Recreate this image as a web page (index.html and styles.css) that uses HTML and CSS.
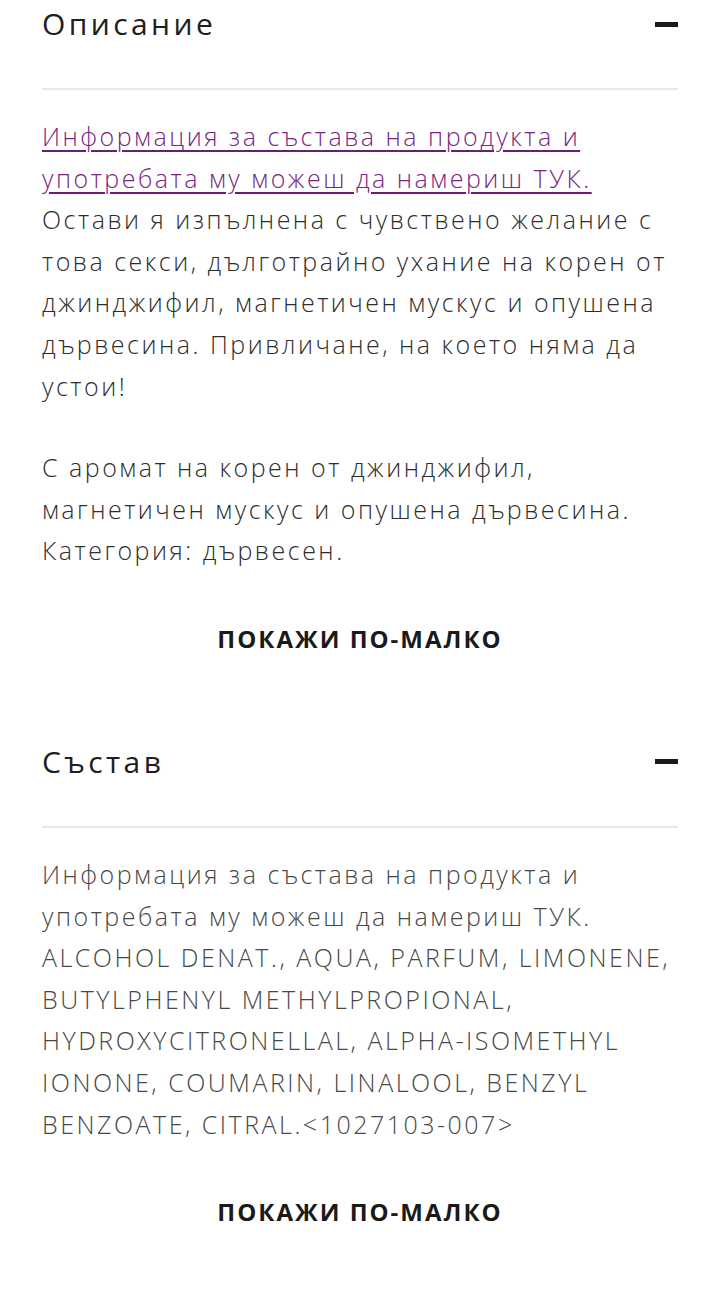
FILE: index.html
```html
<!DOCTYPE html>
<html lang="bg">
<head>
    <meta charset="UTF-8">
    <meta name="viewport" content="width=device-width, initial-scale=1.0">
    <title>Описание</title>
    <link rel="stylesheet" href="styles.css">
</head>
<body>
    <div class="accordion">
        <div class="section">
            <div class="section-head">
                <h2 class="section-title">Описание</h2>
                <span class="toggle"></span>
            </div>
            <div class="section-body">
                <p class="text"><a href="#" class="text-link">Информация за състава на продукта и употребата му можеш да намериш ТУК.</a> Остави я изпълнена с чувствено желание с това секси, дълготрайно ухание на корен от джинджифил, магнетичен мускус и опушена дървесина. Привличане, на което няма да устои!</p>
                <p class="text">С аромат на корен от джинджифил, магнетичен мускус и опушена дървесина. Категория: дървесен.</p>
                <a href="#" class="less-button">ПОКАЖИ ПО-МАЛКО</a>
            </div>
        </div>
        <div class="section">
            <div class="section-head">
                <h2 class="section-title">Състав</h2>
                <span class="toggle"></span>
            </div>
            <div class="section-body">
                <p class="text text-muted">Информация за състава на продукта и употребата му можеш да намериш ТУК. ALCOHOL DENAT., AQUA, PARFUM, LIMONENE, BUTYLPHENYL METHYLPROPIONAL, HYDROXYCITRONELLAL, ALPHA-ISOMETHYL IONONE, COUMARIN, LINALOOL, BENZYL BENZOATE, CITRAL.&lt;1027103-007&gt;</p>
                <a href="#" class="less-button">ПОКАЖИ ПО-МАЛКО</a>
            </div>
        </div>
    </div>
</body>
</html>
```
FILE: styles.css
```css
body {
    margin: 0;
    background-color: #ffffff;
    font-family: "Open Sans", "Liberation Sans", sans-serif;
    color: #2b2b2b;
}
.accordion {
    padding: 4px 42px 0;
}
.section-head {
    display: flex;
    align-items: center;
    justify-content: space-between;
    padding-bottom: 44px;
    border-bottom: 2px solid #e5e9ea;
}
.section-title {
    margin: 0;
    font-size: 30px;
    line-height: 40px;
    font-weight: 400;
    letter-spacing: 3.4px;
    color: #1e1e1e;
}
.toggle {
    width: 23px;
    height: 5px;
    background-color: #1a1a1a;
}
.section-body {
    padding-top: 26px;
    padding-bottom: 76px;
}
.text {
    margin: 0 0 40px;
    font-size: 25px;
    font-weight: 300;
    line-height: 41.6px;
    letter-spacing: 2.5px;
    color: #2e2e2e;
}
.text-muted {
    color: #484848;
}
.text-link {
    color: #7a2680;
    text-decoration: underline;
    text-decoration-color: #6c1c72;
    text-underline-offset: 4px;
    text-decoration-thickness: 2px;
}
.less-button {
    display: block;
    padding: 12px 0;
    line-height: 30px;
    text-align: center;
    font-size: 24px;
    font-weight: 700;
    letter-spacing: 2px;
    color: #1a1a1a;
    text-decoration: none;
}
```
